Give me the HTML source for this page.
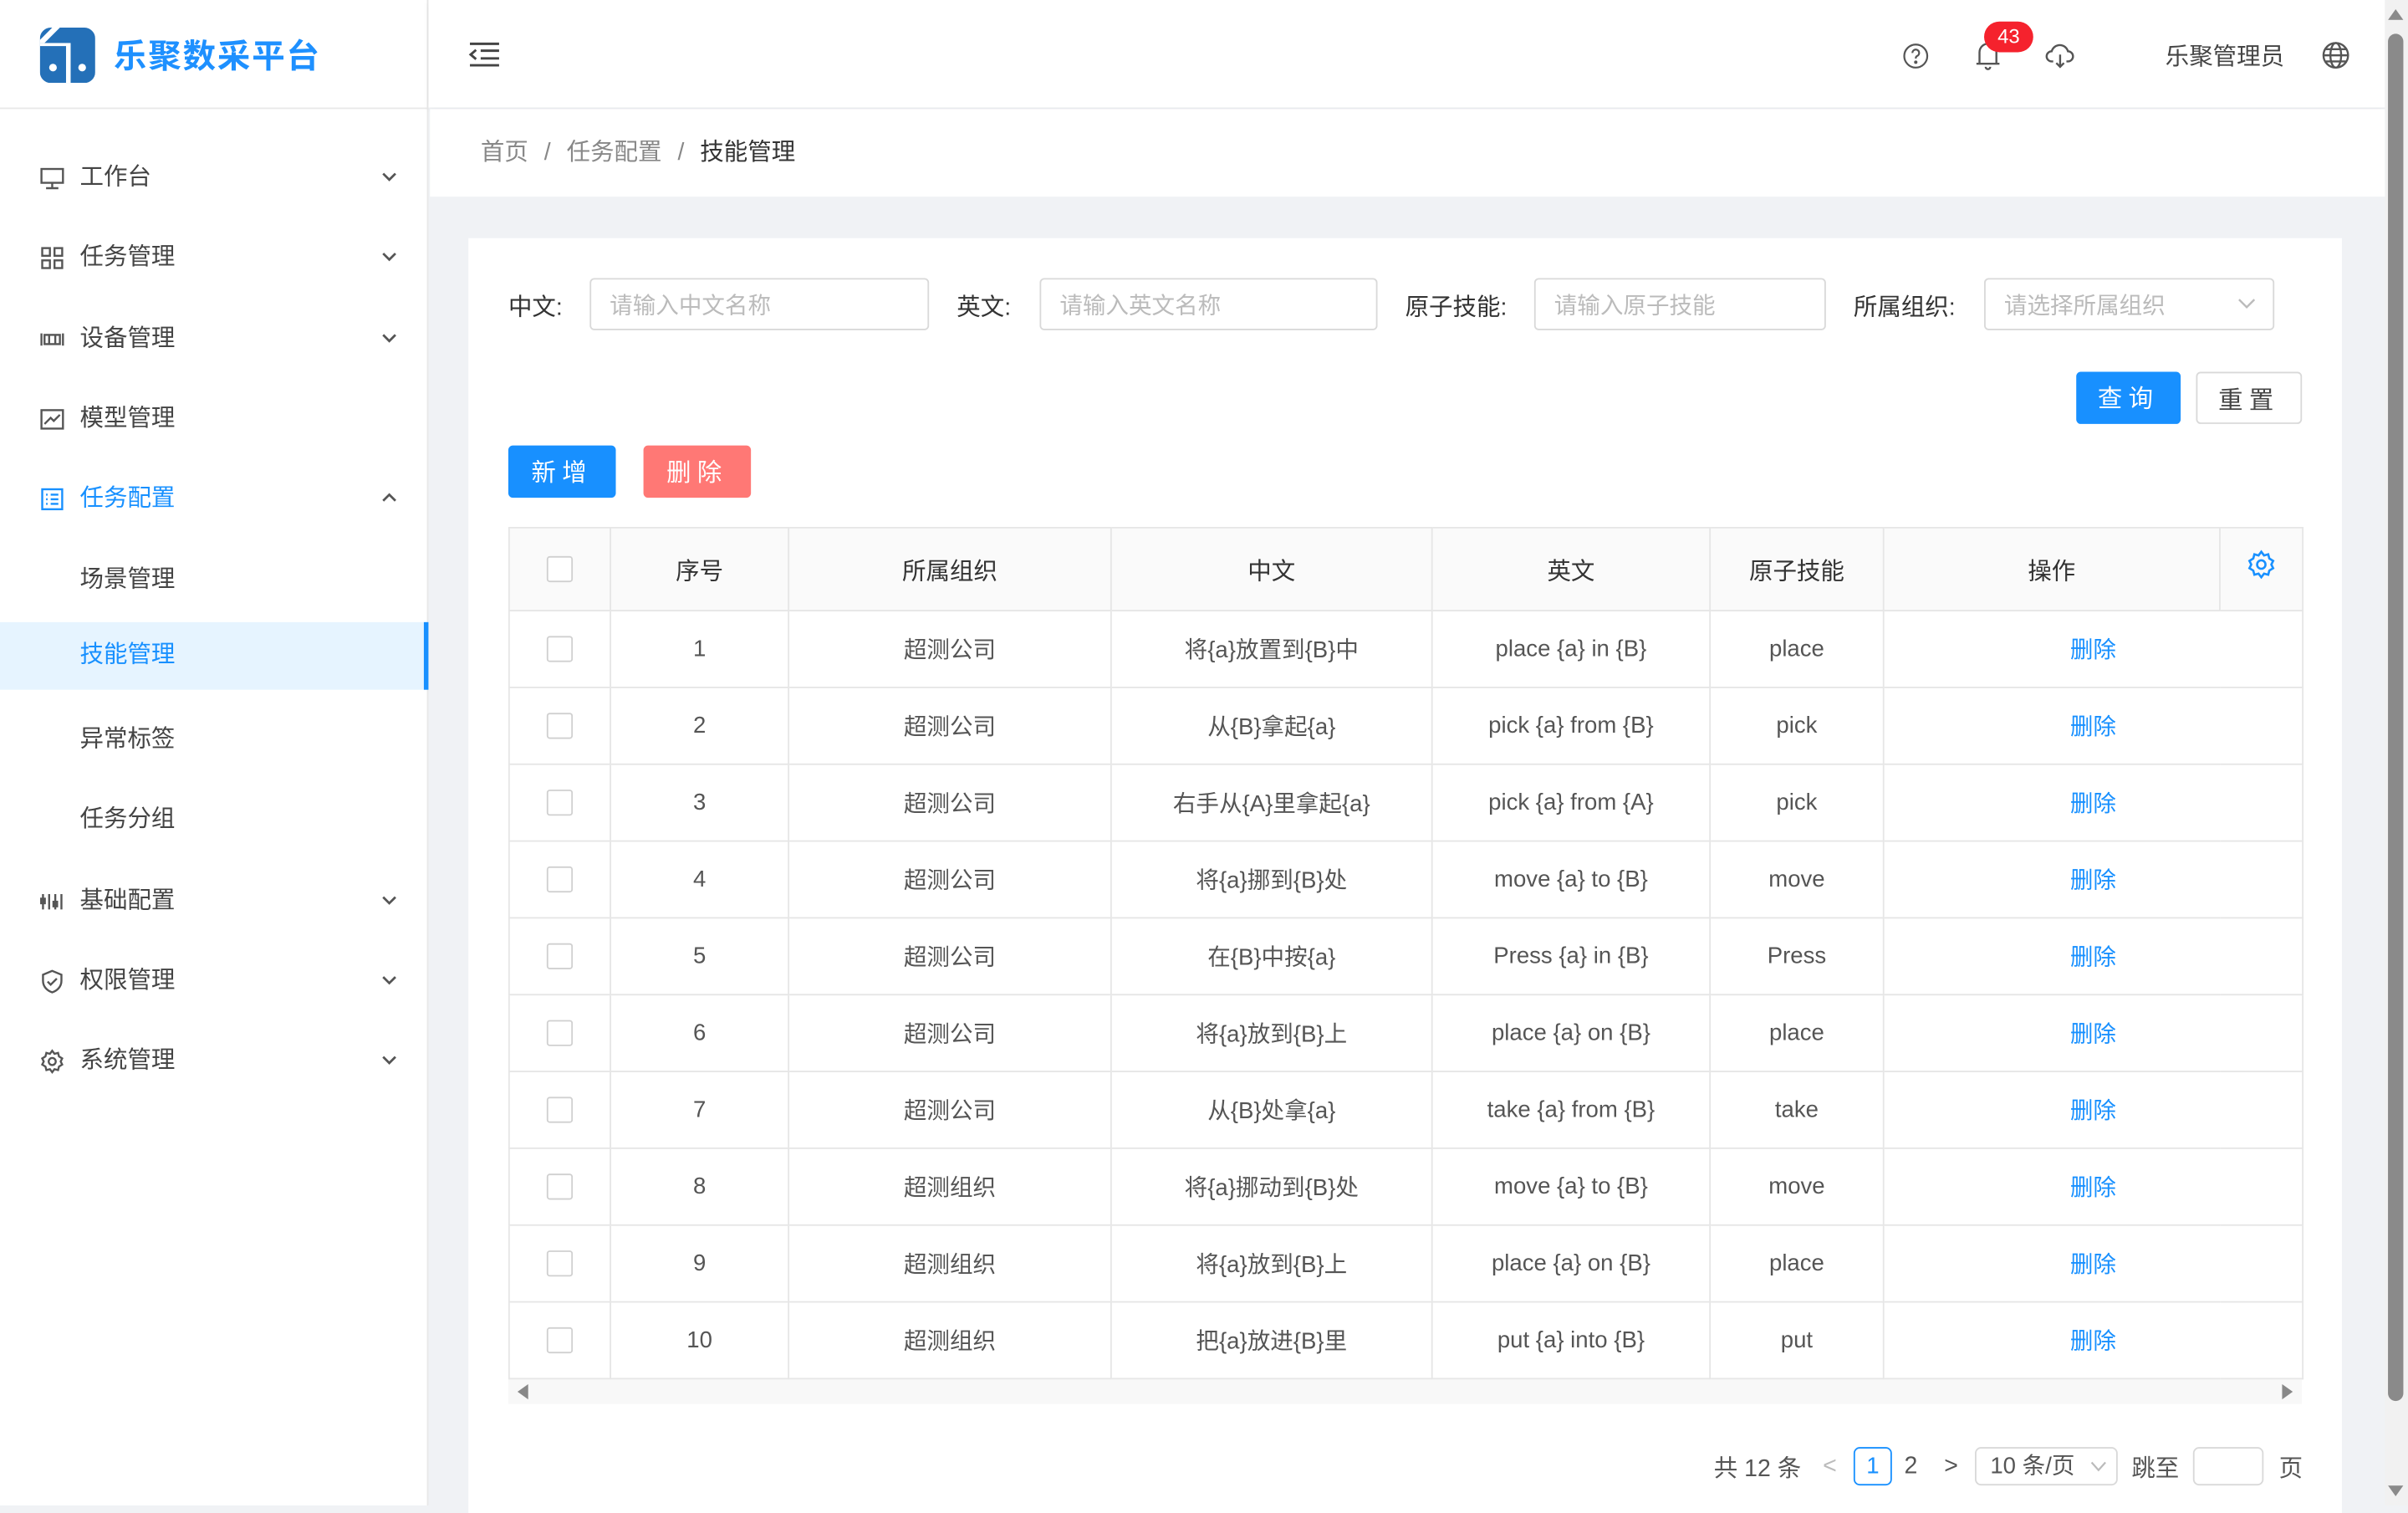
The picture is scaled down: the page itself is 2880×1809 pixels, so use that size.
<!DOCTYPE html>
<html><head><meta charset="utf-8">
<style>
*{box-sizing:border-box;margin:0;padding:0}
html,body{width:2880px;height:1800px;overflow:hidden;background:#f0f2f5}
#s{position:absolute;left:0;top:0;width:1568px;height:980px;transform:scale(1.8367);transform-origin:0 0;font-family:"Liberation Sans","Noto Sans CJK SC",sans-serif;color:#555;background:#f0f2f5}
.abs{position:absolute}
.side{left:0;top:0;width:279px;height:980px;background:#fff;border-right:1px solid #e8e8e8}
.logo{left:0;top:0;width:279px;height:71px;border-bottom:1px solid #e8e8e8}
.mi{position:absolute;left:0;width:279px;height:44px;font-size:15.5px;color:#444;line-height:46px}
.mi .t{position:absolute;left:52px}
.mi svg.ic{position:absolute;left:26px;top:15px}
.mi .ch{position:absolute;left:248px;top:18px}
.hdr{left:279px;top:0;width:1274px;height:70px;background:#fff;box-shadow:0 1px 4px rgba(0,0,0,.06)}
.bc{left:280px;top:71px;width:1273px;height:57px;background:#fff;font-size:15.5px;line-height:58px;padding-left:33px;color:#888}
.card{left:305px;top:155px;width:1220px;height:830px;background:#fff}
.lbl{position:absolute;font-size:15.5px;color:#333;top:188px}
.inp{position:absolute;top:181px;height:34px;border:1px solid #d9d9d9;border-radius:3px;font-size:15px;color:#bbb;line-height:36px;padding-left:12px;background:#fff}
.btn{position:absolute;height:34px;border-radius:3px;font-size:16px;line-height:37px;text-align:center;letter-spacing:4px}
table{position:absolute;left:331px;top:343px;width:1168px;border-collapse:collapse;font-size:15px;table-layout:fixed}
td,th{border:1px solid #e6e6e6;text-align:center;height:50px;color:#555;font-weight:normal}
th{height:54px;background:#fafafa;color:#333;font-size:15.5px}
.cb{display:inline-block;width:17px;height:17px;border:1px solid #d0d0d0;border-radius:2px;vertical-align:middle;background:#fff}
td a{color:#1890ff}
.pg{position:absolute;top:955px;font-size:15.5px;color:#555;transform:translateY(-50%)}
</style></head><body><div id="s">
<div class="abs side"></div>
<div class="abs logo">
<svg class="abs" style="left:26px;top:18px" width="36" height="36" viewBox="0 0 36 36"><rect x="0" y="0" width="36" height="36" rx="7" fill="#2470b8"/><polygon points="0,8 8,0 13,0 3,10 0,10" fill="#fff"/><rect x="0" y="10" width="17" height="2" fill="#fff"/><rect x="17" y="10" width="3" height="26" fill="#fff"/><circle cx="8.5" cy="26" r="2.5" fill="#fff"/><circle cx="27.5" cy="26" r="2.5" fill="#fff"/></svg>
<div class="abs" style="left:74px;top:20px;font-size:21.5px;font-weight:bold;color:#1e90ff;letter-spacing:1px">乐聚数采平台</div>
</div>

<div class="mi" style="top:93px"><svg class="ic" width="16" height="16" viewBox="0 0 16 16" fill="none" stroke="#555" stroke-width="1.3"><rect x="1" y="2" width="14" height="9"/><path d="M8 11v3M4 14.5h8"/></svg><span class="t">工作台</span><svg class="ch" width="11" height="8" viewBox="0 0 11 8"><path d="M1.5 2l4 4 4-4" fill="none" stroke="#555" stroke-width="1.5"/></svg></div>
<div class="mi" style="top:145px"><svg class="ic" width="16" height="16" viewBox="0 0 16 16" fill="none" stroke="#555" stroke-width="1.3"><rect x="1.5" y="1.5" width="5" height="5"/><rect x="9.5" y="1.5" width="5" height="5"/><rect x="1.5" y="9.5" width="5" height="5"/><rect x="9.5" y="9.5" width="5" height="5"/></svg><span class="t">任务管理</span><svg class="ch" width="11" height="8" viewBox="0 0 11 8"><path d="M1.5 2l4 4 4-4" fill="none" stroke="#555" stroke-width="1.5"/></svg></div>
<div class="mi" style="top:198px"><svg class="ic" width="16" height="16" viewBox="0 0 16 16" fill="none" stroke="#555" stroke-width="1.3"><rect x="3" y="5" width="10" height="6"/><path d="M1 4v8M15 4v8M6 5v6M10 5v6"/></svg><span class="t">设备管理</span><svg class="ch" width="11" height="8" viewBox="0 0 11 8"><path d="M1.5 2l4 4 4-4" fill="none" stroke="#555" stroke-width="1.5"/></svg></div>
<div class="mi" style="top:250px"><svg class="ic" width="16" height="16" viewBox="0 0 16 16" fill="none" stroke="#555" stroke-width="1.3"><rect x="1" y="2" width="14" height="12"/><path d="M3 11l4-4 2 2 4-4"/></svg><span class="t">模型管理</span></div>
<div class="mi" style="top:302px;color:#1890ff"><svg class="ic" width="16" height="16" viewBox="0 0 16 16" fill="none" stroke="#1890ff" stroke-width="1.3"><rect x="1.5" y="1.5" width="13" height="13"/><path d="M4 5h1M7 5h5M4 8h1M7 8h5M4 11h1M7 11h5"/></svg><span class="t">任务配置</span><svg class="ch" width="11" height="8" viewBox="0 0 11 8"><path d="M1.5 6l4-4 4 4" fill="none" stroke="#555" stroke-width="1.5"/></svg></div>
<div class="mi" style="top:355px"><span class="t">场景管理</span></div>
<div class="mi" style="top:405px;height:44px;line-height:44px;background:#e6f4ff;color:#1890ff;border-right:3px solid #1890ff"><span class="t">技能管理</span></div>
<div class="mi" style="top:459px"><span class="t">异常标签</span></div>
<div class="mi" style="top:511px"><span class="t">任务分组</span></div>
<div class="mi" style="top:564px"><svg class="ic" width="16" height="16" viewBox="0 0 16 16" fill="none" stroke="#555" stroke-width="1.3"><path d="M2 3v10M6 3v10M10 3v10M14 3v10"/><rect x="0.8" y="6" width="2.4" height="3"/><rect x="8.8" y="8" width="2.4" height="3"/></svg><span class="t">基础配置</span><svg class="ch" width="11" height="8" viewBox="0 0 11 8"><path d="M1.5 2l4 4 4-4" fill="none" stroke="#555" stroke-width="1.5"/></svg></div>
<div class="mi" style="top:616px"><svg class="ic" width="16" height="16" viewBox="0 0 16 16" fill="none" stroke="#555" stroke-width="1.3"><path d="M8 1l6 2.5v4c0 4-3 6.5-6 7.5-3-1-6-3.5-6-7.5v-4z"/><path d="M5 8l2 2 4-4"/></svg><span class="t">权限管理</span><svg class="ch" width="11" height="8" viewBox="0 0 11 8"><path d="M1.5 2l4 4 4-4" fill="none" stroke="#555" stroke-width="1.5"/></svg></div>
<div class="mi" style="top:668px"><svg class="ic" width="16" height="16" viewBox="0 0 16 16" fill="none" stroke="#555" stroke-width="1.3"><circle cx="8" cy="8" r="2.3"/><path d="M8 1l1.5 2 2.3-.6.6 2.3 2.1 1.3-1 2 1 2-2.1 1.3-.6 2.3-2.3-.6L8 15l-1.5-2-2.3.6-.6-2.3-2.1-1.3 1-2-1-2 2.1-1.3.6-2.3 2.3.6z"/></svg><span class="t">系统管理</span><svg class="ch" width="11" height="8" viewBox="0 0 11 8"><path d="M1.5 2l4 4 4-4" fill="none" stroke="#555" stroke-width="1.5"/></svg></div>

<div class="abs hdr">
<svg class="abs" style="left:26px;top:27px" width="21" height="17" viewBox="0 0 21 17" fill="none" stroke="#444" stroke-width="1.6"><path d="M1 1.5h19M8 6h12M8 11h12M1 15.5h19M5 5.5l-3.5 3 3.5 3"/></svg>
<svg class="abs" style="left:960px;top:28px" width="17" height="17" viewBox="0 0 17 17" fill="none" stroke="#555" stroke-width="1.2"><circle cx="8.5" cy="8.5" r="7.5"/><path d="M6.3 6.5a2.2 2.2 0 1 1 3 2c-.7.3-.8.8-.8 1.6"/><circle cx="8.5" cy="12.5" r=".5" fill="#555"/></svg>
<svg class="abs" style="left:1007px;top:26px" width="17" height="20" viewBox="0 0 17 20" fill="none" stroke="#555" stroke-width="1.3"><path d="M3 15V8a5.5 5.5 0 0 1 11 0v7M1 15.5h15M7 17.5a1.5 1.5 0 0 0 3 0"/></svg>
<div class="abs" style="left:1013px;top:14px;width:32px;height:20px;border-radius:10px;background:#f5222d;color:#fff;font-size:13px;line-height:20px;text-align:center">43</div>
<svg class="abs" style="left:1053px;top:28px" width="19" height="17" viewBox="0 0 19 17" fill="none" stroke="#555" stroke-width="1.3"><path d="M5 12H4a3.3 3.3 0 0 1 0-6.6 5.5 5.5 0 0 1 10.6 0 3.3 3.3 0 0 1 0 6.6h-1M9.5 7.5v8M7 13l2.5 2.5L12 13"/></svg>
<div class="abs" style="left:1131px;top:25px;font-size:15.5px;color:#444">乐聚管理员</div>
<svg class="abs" style="left:1233px;top:27px" width="18" height="18" viewBox="0 0 18 18" fill="none" stroke="#555" stroke-width="1.3"><circle cx="9" cy="9" r="8"/><ellipse cx="9" cy="9" rx="3.5" ry="8"/><path d="M1 9h16M2.5 5h13M2.5 13h13"/></svg>
</div>
<div class="abs bc">首页 <span style="margin:0 6px">/</span> 任务配置 <span style="margin:0 6px">/</span> <span style="color:#333">技能管理</span></div>

<div class="abs" style="left:1553px;top:0;width:15px;height:980px;background:#f1f1f1"></div>
<div class="abs" style="left:1555px;top:22px;width:10px;height:890px;border-radius:5px;background:#8a8a8a"></div>
<svg class="abs" style="left:1555px;top:5px" width="10" height="8"><path d="M0 8L5 1 10 8z" fill="#8a8a8a"/></svg>
<svg class="abs" style="left:1555px;top:967px" width="10" height="8"><path d="M0 0L5 7 10 0z" fill="#8a8a8a"/></svg>

<div class="abs card"></div>
<div class="lbl" style="left:331px">中文:</div>
<div class="inp" style="left:384px;width:221px">请输入中文名称</div>
<div class="lbl" style="left:623px">英文:</div>
<div class="inp" style="left:677px;width:220px">请输入英文名称</div>
<div class="lbl" style="left:915px">原子技能:</div>
<div class="inp" style="left:999px;width:190px">请输入原子技能</div>
<div class="lbl" style="left:1207px">所属组织:</div>
<div class="inp" style="left:1292px;width:189px">请选择所属组织<svg class="abs" style="left:164px;top:12px" width="12" height="8"><path d="M1 1l5 5 5-5" fill="none" stroke="#bbb" stroke-width="1.3"/></svg></div>

<div class="btn" style="left:1352px;top:242px;width:68px;background:#1890ff;color:#fff">查询</div>
<div class="btn" style="left:1430px;top:242px;width:69px;border:1px solid #d9d9d9;color:#444;background:#fff">重置</div>
<div class="btn" style="left:331px;top:290px;width:70px;background:#1890ff;color:#fff">新增</div>
<div class="btn" style="left:419px;top:290px;width:70px;background:#ff7875;color:#fff">删除</div>

<table>
<colgroup><col style="width:66px"><col style="width:116px"><col style="width:210px"><col style="width:209px"><col style="width:181px"><col style="width:113px"><col style="width:219px"><col style="width:54px"></colgroup>
<tr><th><span class="cb"></span></th><th>序号</th><th>所属组织</th><th>中文</th><th>英文</th><th>原子技能</th><th>操作</th><th><svg width="19" height="19" viewBox="0 0 16 16" fill="none" stroke="#1890ff" stroke-width="1.2" style="vertical-align:middle;margin-top:-6px"><circle cx="8" cy="8" r="2.3"/><path d="M8 1l1.5 2 2.3-.6.6 2.3 2.1 1.3-1 2 1 2-2.1 1.3-.6 2.3-2.3-.6L8 15l-1.5-2-2.3.6-.6-2.3-2.1-1.3 1-2-1-2 2.1-1.3.6-2.3 2.3.6z"/></svg></th></tr>
<tr><td><span class="cb"></span></td><td>1</td><td>超测公司</td><td>将{a}放置到{B}中</td><td>place {a} in {B}</td><td>place</td><td colspan="2"><a>删除</a></td></tr>
<tr><td><span class="cb"></span></td><td>2</td><td>超测公司</td><td>从{B}拿起{a}</td><td>pick {a} from {B}</td><td>pick</td><td colspan="2"><a>删除</a></td></tr>
<tr><td><span class="cb"></span></td><td>3</td><td>超测公司</td><td>右手从{A}里拿起{a}</td><td>pick {a} from {A}</td><td>pick</td><td colspan="2"><a>删除</a></td></tr>
<tr><td><span class="cb"></span></td><td>4</td><td>超测公司</td><td>将{a}挪到{B}处</td><td>move {a} to {B}</td><td>move</td><td colspan="2"><a>删除</a></td></tr>
<tr><td><span class="cb"></span></td><td>5</td><td>超测公司</td><td>在{B}中按{a}</td><td>Press {a} in {B}</td><td>Press</td><td colspan="2"><a>删除</a></td></tr>
<tr><td><span class="cb"></span></td><td>6</td><td>超测公司</td><td>将{a}放到{B}上</td><td>place {a} on {B}</td><td>place</td><td colspan="2"><a>删除</a></td></tr>
<tr><td><span class="cb"></span></td><td>7</td><td>超测公司</td><td>从{B}处拿{a}</td><td>take {a} from {B}</td><td>take</td><td colspan="2"><a>删除</a></td></tr>
<tr><td><span class="cb"></span></td><td>8</td><td>超测组织</td><td>将{a}挪动到{B}处</td><td>move {a} to {B}</td><td>move</td><td colspan="2"><a>删除</a></td></tr>
<tr><td><span class="cb"></span></td><td>9</td><td>超测组织</td><td>将{a}放到{B}上</td><td>place {a} on {B}</td><td>place</td><td colspan="2"><a>删除</a></td></tr>
<tr><td><span class="cb"></span></td><td>10</td><td>超测组织</td><td>把{a}放进{B}里</td><td>put {a} into {B}</td><td>put</td><td colspan="2"><a>删除</a></td></tr>
</table>
<div class="abs" style="left:331px;top:898px;width:1168px;height:16px;background:#f8f8f8"></div>
<svg class="abs" style="left:336px;top:901px" width="8" height="10"><path d="M8 0L1 5 8 10z" fill="#888"/></svg>
<svg class="abs" style="left:1486px;top:901px" width="8" height="10"><path d="M0 0L7 5 0 10z" fill="#888"/></svg>

<div class="pg" style="left:1116px">共 12 条</div>
<div class="pg" style="left:1187px;color:#bbb">&lt;</div>
<div class="abs" style="left:1207px;top:942px;width:25px;height:25px;border:1px solid #1890ff;border-radius:4px;color:#1890ff;font-size:15px;line-height:24px;text-align:center">1</div>
<div class="pg" style="left:1240px">2</div>
<div class="pg" style="left:1266px">&gt;</div>
<div class="abs" style="left:1286px;top:942px;width:93px;height:25px;border:1px solid #d9d9d9;border-radius:4px;font-size:15px;line-height:24px;padding-left:9px;color:#555">10 条/页<svg class="abs" style="left:74px;top:8px" width="11" height="8"><path d="M1 1l4.5 5 4.5-5" fill="none" stroke="#bbb" stroke-width="1.2"/></svg></div>
<div class="pg" style="left:1388px">跳至</div>
<div class="abs" style="left:1428px;top:942px;width:46px;height:25px;border:1px solid #d9d9d9;border-radius:4px"></div>
<div class="pg" style="left:1484px">页</div>
</div></body></html>
